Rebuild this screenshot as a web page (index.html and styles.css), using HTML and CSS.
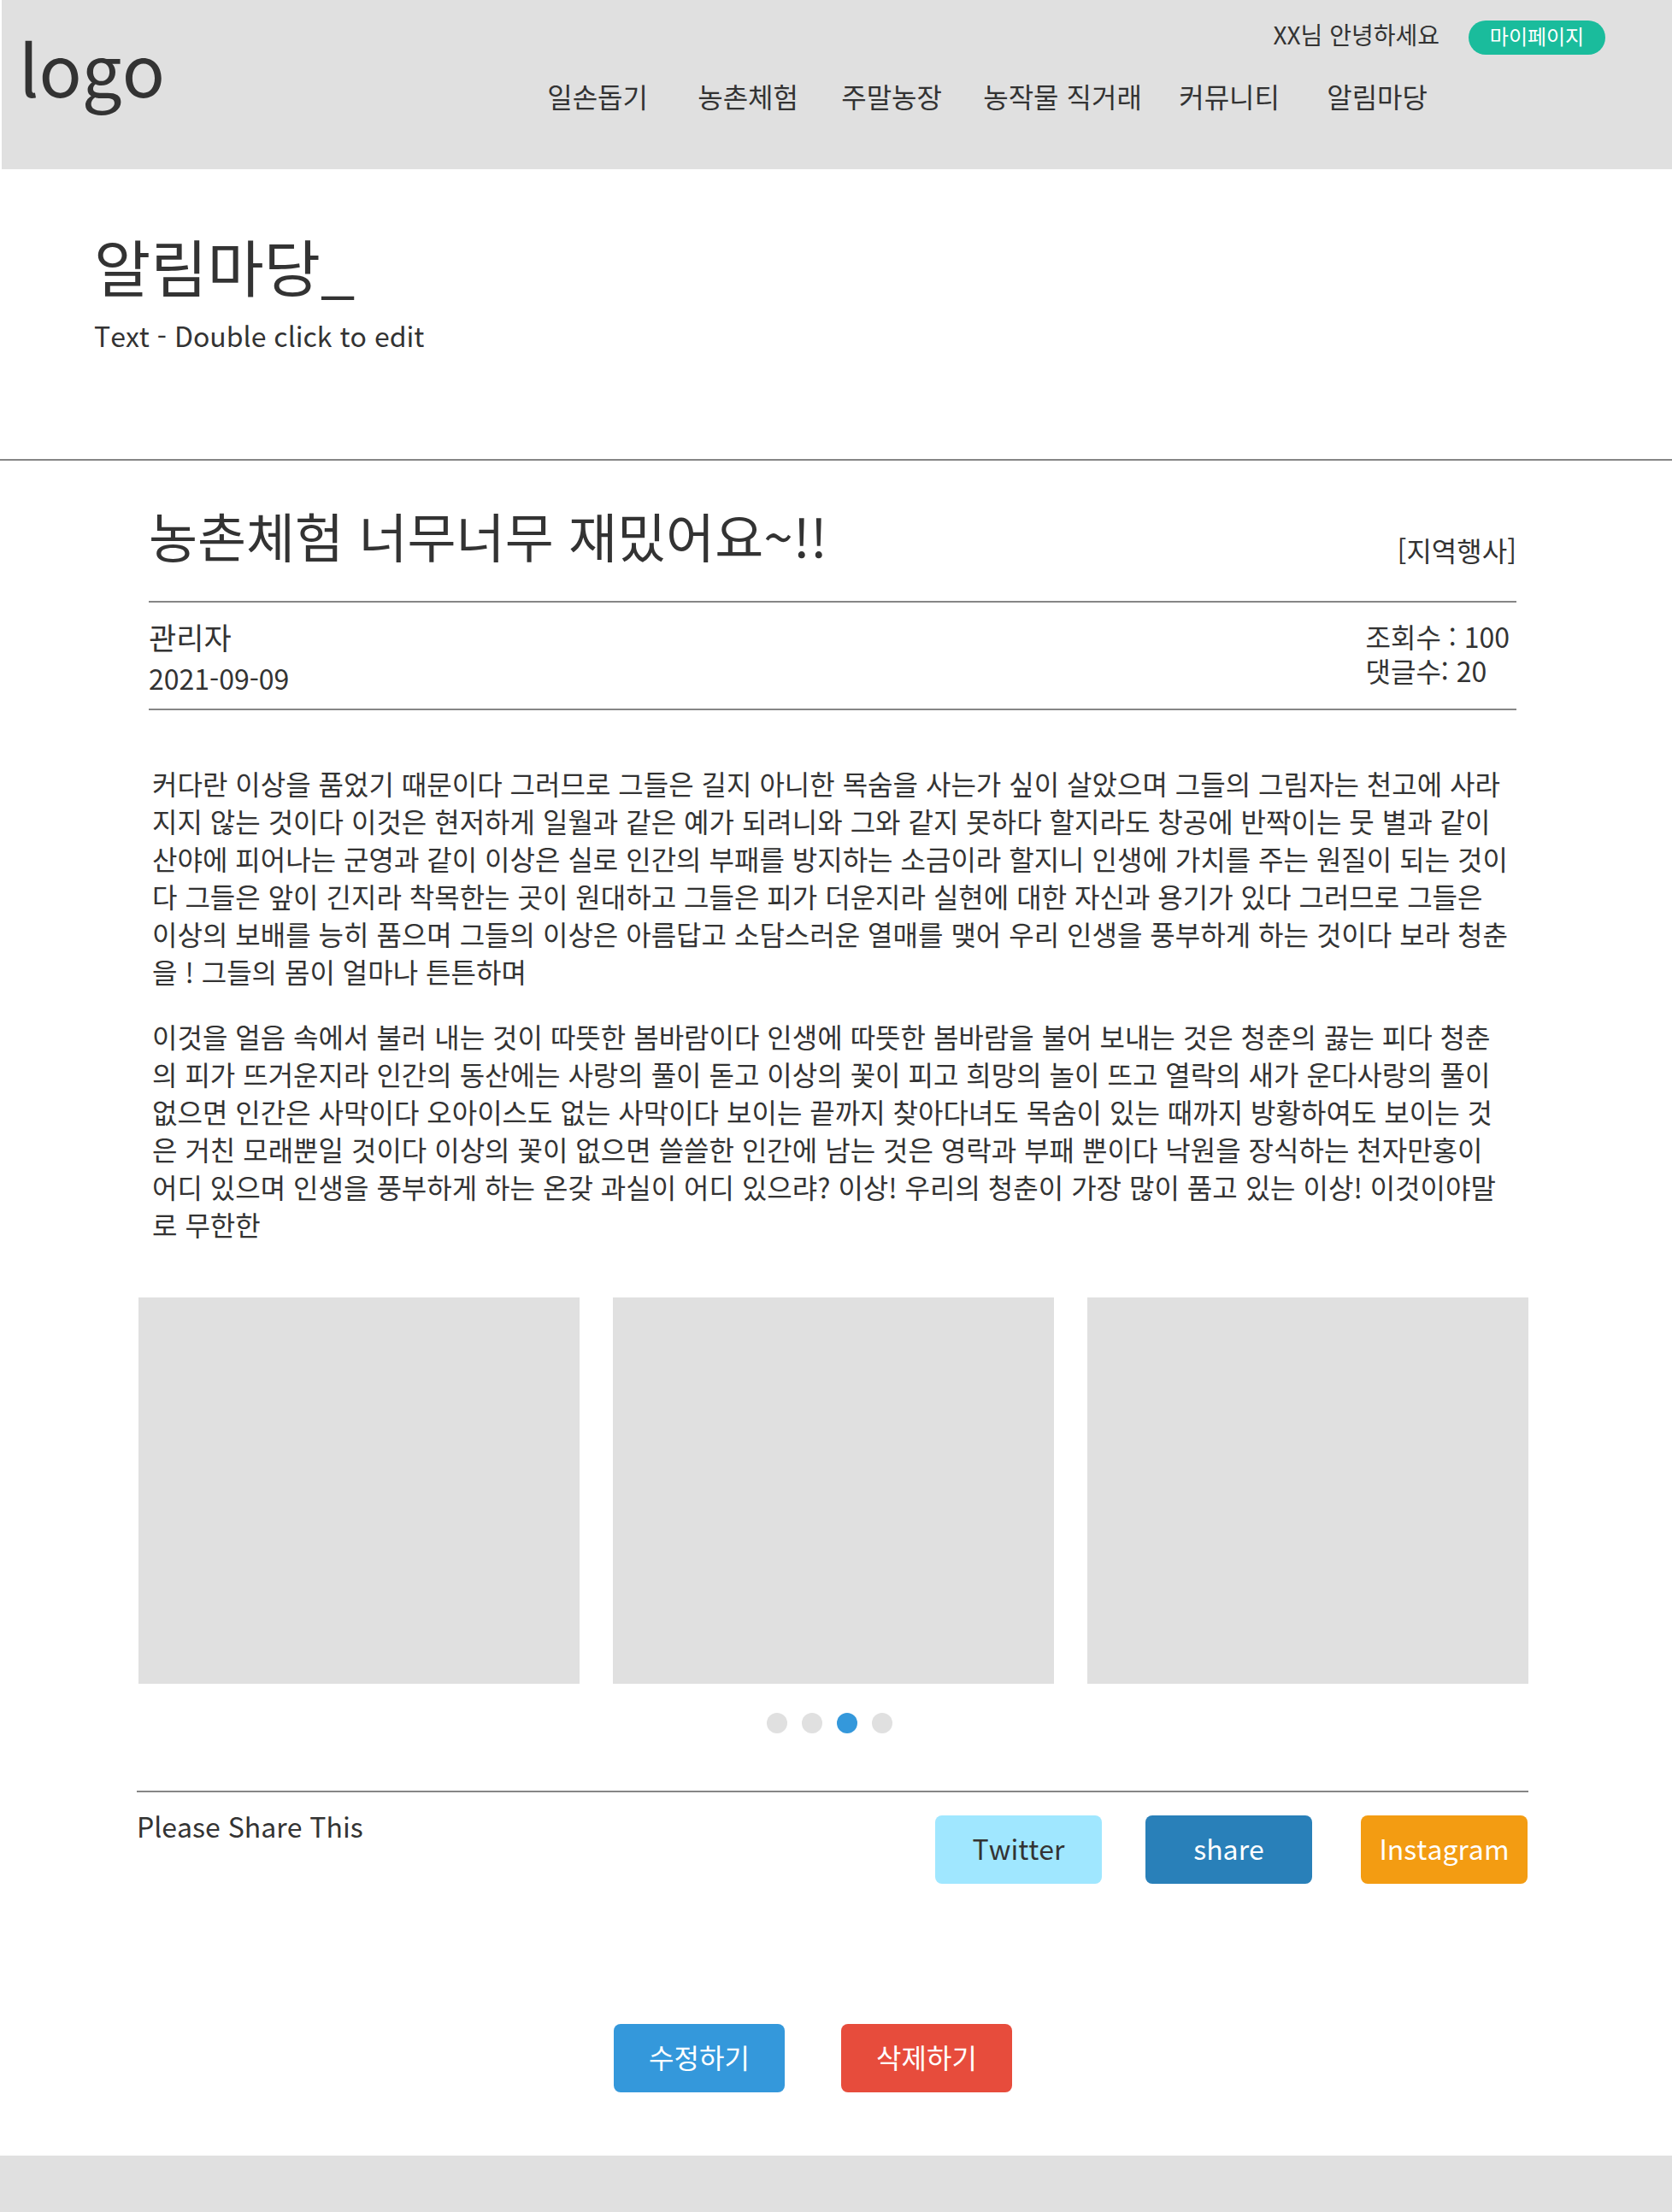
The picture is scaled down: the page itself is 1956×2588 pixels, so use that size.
FILE: index.html
```html
<!DOCTYPE html>
<html lang="ko">
<head>
<meta charset="utf-8">
<meta name="viewport" content="width=device-width, initial-scale=1">
<title>알림마당</title>
<link rel="stylesheet" href="styles.css">
</head>
<body>
<header class="site-header">
  <a class="logo" href="#">logo</a>
  <div class="header-side">
    <div class="user-bar">
      <span class="greeting">XX님 안녕하세요</span>
      <button class="mypage" type="button">마이페이지</button>
    </div>
    <nav class="main-nav">
      <a href="#">일손돕기</a>
      <a href="#">농촌체험</a>
      <a href="#">주말농장</a>
      <a href="#">농작물 직거래</a>
      <a href="#">커뮤니티</a>
      <a href="#">알림마당</a>
    </nav>
  </div>
</header>

<section class="page-heading">
  <h1>알림마당_</h1>
  <p>Text - Double click to edit</p>
</section>

<main class="content">
  <article class="post">
    <header class="post-header">
      <h2>농촌체험 너무너무 재밌어요~!!</h2>
      <span class="category">[지역행사]</span>
    </header>
    <div class="post-meta">
      <div class="author">
        <p class="author-name">관리자</p>
        <p><time datetime="2021-09-09">2021-09-09</time></p>
      </div>
      <div class="counts">
        <p>조회수 : 100</p>
        <p>댓글수: 20</p>
      </div>
    </div>
    <div class="post-body">
      <p>커다란 이상을 품었기 때문이다 그러므로 그들은 길지 아니한 목숨을 사는가 싶이 살았으며 그들의 그림자는 천고에 사라지지 않는 것이다 이것은 현저하게 일월과 같은 예가 되려니와 그와 같지 못하다 할지라도 창공에 반짝이는 뭇 별과 같이 산야에 피어나는 군영과 같이 이상은 실로 인간의 부패를 방지하는 소금이라 할지니 인생에 가치를 주는 원질이 되는 것이다 그들은 앞이 긴지라 착목한는 곳이 원대하고 그들은 피가 더운지라 실현에 대한 자신과 용기가 있다 그러므로 그들은 이상의 보배를 능히 품으며 그들의 이상은 아름답고 소담스러운 열매를 맺어 우리 인생을 풍부하게 하는 것이다 보라 청춘을 ! 그들의 몸이 얼마나 튼튼하며</p>
      <p>이것을 얼음 속에서 불러 내는 것이 따뜻한 봄바람이다 인생에 따뜻한 봄바람을 불어 보내는 것은 청춘의 끓는 피다 청춘의 피가 뜨거운지라 인간의 동산에는 사랑의 풀이 돋고 이상의 꽃이 피고 희망의 놀이 뜨고 열락의 새가 운다사랑의 풀이 없으면 인간은 사막이다 오아이스도 없는 사막이다 보이는 끝까지 찾아다녀도 목숨이 있는 때까지 방황하여도 보이는 것은 거친 모래뿐일 것이다 이상의 꽃이 없으면 쓸쓸한 인간에 남는 것은 영락과 부패 뿐이다 낙원을 장식하는 천자만홍이 어디 있으며 인생을 풍부하게 하는 온갖 과실이 어디 있으랴? 이상! 우리의 청춘이 가장 많이 품고 있는 이상! 이것이야말로 무한한</p>
    </div>
  </article>

  <section class="gallery" aria-label="사진">
    <div class="photo"></div>
    <div class="photo"></div>
    <div class="photo"></div>
  </section>
  <div class="dots">
    <button class="dot" type="button" aria-label="1"></button>
    <button class="dot" type="button" aria-label="2"></button>
    <button class="dot dot-active" type="button" aria-label="3"></button>
    <button class="dot" type="button" aria-label="4"></button>
  </div>

  <section class="share">
    <p>Please Share This</p>
    <div class="share-buttons">
      <button class="btn btn-twitter" type="button">Twitter</button>
      <button class="btn btn-share" type="button">share</button>
      <button class="btn btn-instagram" type="button">Instagram</button>
    </div>
  </section>

  <div class="actions">
    <button class="btn btn-edit" type="button">수정하기</button>
    <button class="btn btn-delete" type="button">삭제하기</button>
  </div>
</main>

<footer class="site-footer"></footer>
</body>
</html>
```
FILE: styles.css
```css
* {
  box-sizing: border-box;
}

body {
  margin: 0;
  background: #fff;
  color: #333;
  font-family: "Noto Sans CJK KR", sans-serif;
  font-size: 32px;
  font-kerning: none;
  font-variant-ligatures: none;
  line-height: 48px;
}

h1, h2, p {
  margin: 0;
  font-weight: 400;
}

a {
  color: inherit;
  text-decoration: none;
}

button {
  border: 0;
  padding: 0;
  font: inherit;
  font-kerning: none;
  font-variant-ligatures: none;
  cursor: pointer;
}

/* Header */
.site-header {
  display: flex;
  justify-content: space-between;
  min-height: 198px;
  margin-left: 2px;
  padding: 24px 78px 24px 20px;
  background: #e0e0e0;
}

.logo {
  font-size: 83px;
  line-height: 108px;
}

.header-side {
  display: flex;
  flex-direction: column;
  align-items: flex-end;
  gap: 24px;
}

.user-bar {
  display: flex;
  align-items: flex-start;
  gap: 34px;
}

.greeting {
  font-size: 28px;
  line-height: 32px;
}

.mypage {
  width: 160px;
  height: 40px;
  padding-bottom: 4px;
  border-radius: 20px;
  background: #1abc9c;
  color: #fff;
  font-size: 24px;
  line-height: 36px;
}

.main-nav {
  display: grid;
  grid-template-columns: 176px 168px 166px 229px 173px auto;
  margin-right: 208px;
  white-space: nowrap;
}

/* Page heading */
.page-heading {
  padding: 56px 110px 119px;
  border-bottom: 2px solid #868686;
}

.page-heading h1 {
  font-size: 72px;
  line-height: 112px;
}

.page-heading p {
  line-height: 52px;
}

/* Post */
.content {
  padding: 0 168px 74px 160px;
}

.post {
  margin: 0 14px;
}

.post-header {
  display: flex;
  justify-content: space-between;
  align-items: flex-end;
  padding: 39px 0 29px;
  border-bottom: 2px solid #868686;
}

.post-header h2 {
  font-size: 62px;
  line-height: 96px;
}

.category {
  line-height: 62px;
}

.post-meta {
  display: flex;
  justify-content: space-between;
  padding: 16px 8px 12px 0;
  border-bottom: 2px solid #868686;
}

.author-name {
  font-size: 35px;
}

.counts {
  padding-top: 3px;
  line-height: 40px;
}

.post-body {
  display: grid;
  gap: 32px;
  padding: 63px 4px 64px;
  line-height: 44px;
}

/* Gallery */
.gallery {
  display: grid;
  grid-template-columns: repeat(3, 1fr);
  gap: 39px;
  padding-left: 2px;
}

.photo {
  height: 452px;
  background: #e0e0e0;
}

.dots {
  display: flex;
  justify-content: center;
  gap: 17px;
  padding: 34px 7px 67px 0;
}

.dot {
  width: 24px;
  height: 24px;
  border-radius: 50%;
  background: #e0e0e0;
}

.dot-active {
  background: #3498db;
}

/* Share and actions */
.share {
  display: flex;
  justify-content: space-between;
  padding-top: 15px;
  border-top: 2px solid #868686;
}

.share-buttons {
  display: grid;
  grid-template-columns: 246px 252px 196px;
  padding-top: 12px;
}

.btn {
  width: 195px;
  height: 80px;
  padding-bottom: 4px;
  border-radius: 8px;
  color: #fff;
}

.btn-twitter {
  background: #a0e7ff;
  color: #333;
}

.btn-share {
  background: #2980b9;
}

.btn-instagram {
  background: #f39c12;
}

.actions {
  display: flex;
  justify-content: center;
  gap: 66px;
  padding: 164px 46px 0 0;
}

.actions .btn {
  width: 200px;
}

.btn-edit {
  background: #3498db;
}

.btn-delete {
  background: #e74c3c;
}

.site-footer {
  height: 66px;
  background: #e0e0e0;
}
```
